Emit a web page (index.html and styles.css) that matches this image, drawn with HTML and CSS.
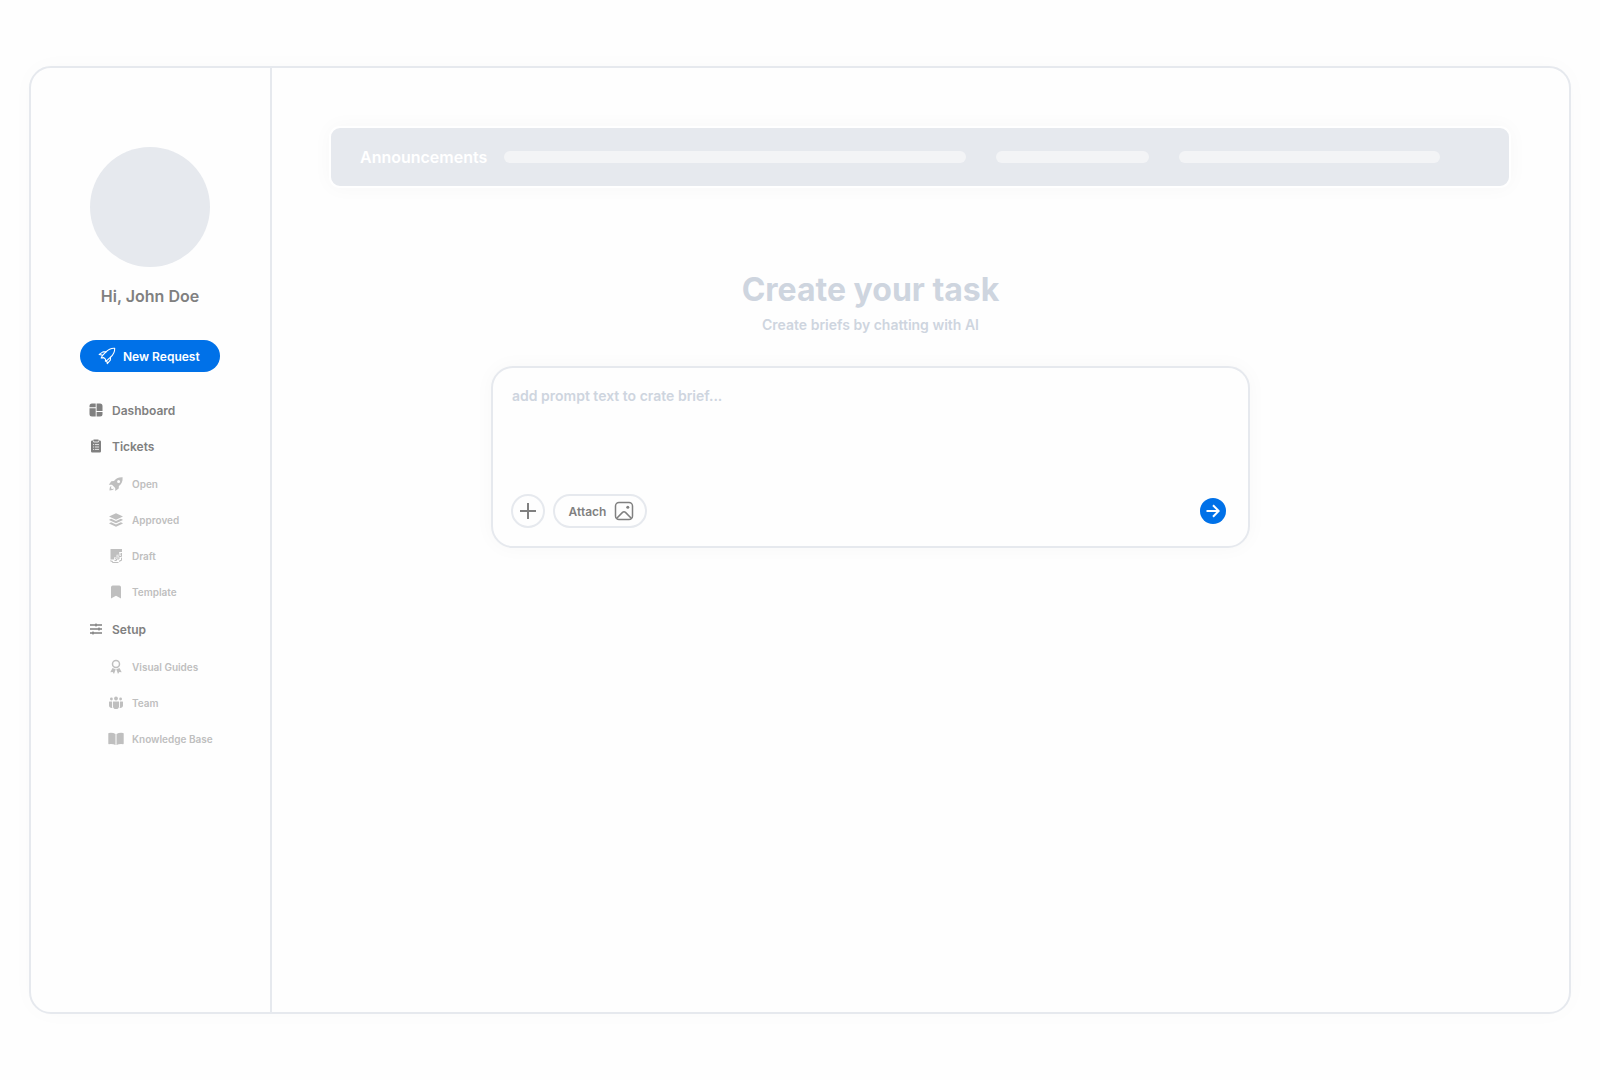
FILE: index.html
```html
<!DOCTYPE html>
<html lang="en">
  <head>
    <meta charset="UTF-8" />
    <meta name="viewport" content="width=device-width, initial-scale=1.0" />
    <title>Create your task</title>
    <link rel="stylesheet" href="styles.css">
  </head>
  <body>
    <div class="app">
      <!-- Sidebar -->
      <aside class="sidebar">
        <div class="avatar"></div>
        <p class="greeting">Hi, John Doe</p>
        <button type="button" class="new-request">
          <svg width="18" height="18" viewBox="0 0 18 18" fill="none" stroke="currentColor" stroke-width="1.1" stroke-linejoin="round" stroke-linecap="round">
            <path d="M16.7 1.2C13.4 1 10.4 2.2 8 4.9L5 4.9L1.2 7.4L4.6 8.3L3.2 11L5.8 10.6L7.6 12.3L7.4 14.2L8.7 13.6L9.3 16.7L12.3 13.2L12.6 10.1C15.4 7.6 16.8 4.8 16.7 1.2Z" />
            <path d="M8 4.9L4.6 8.3M12.6 10.1L8.7 13.6" />
          </svg>
          New Request
        </button>

        <nav>
          <ul class="menu">
            <li>
              <a href="#" class="menu-link">
                <svg width="14" height="14" viewBox="0 0 14 14" fill="currentColor">
                  <path d="M3 .5H6.7V4.2H.5V3A2.5 2.5 0 0 1 3 .5ZM.5 5.2H6.7V13.5H3A2.5 2.5 0 0 1 .5 11ZM7.6 .5H11A2.5 2.5 0 0 1 13.5 3V8H7.6ZM7.6 9H13.5V11A2.5 2.5 0 0 1 11 13.5H7.6Z" />
                </svg>
                Dashboard
              </a>
            </li>
            <li>
              <a href="#" class="menu-link">
                <svg width="14" height="14" viewBox="0 0 14 14">
                  <path fill="currentColor" d="M3.2 1.5H4.5V.5H9.5V1.5H10.8A1.2 1.2 0 0 1 12 2.7V12.3A1.2 1.2 0 0 1 10.8 13.5H3.2A1.2 1.2 0 0 1 2 12.3V2.7A1.2 1.2 0 0 1 3.2 1.5Z" />
                  <path fill="none" stroke="#fff" stroke-width=".8" d="M4.6 1.8V3H9.4V1.8M4 5.6H5M5.8 5.6H10M4 8H5M5.8 8H10M4 10.4H5M5.8 10.4H10" />
                </svg>
                Tickets
              </a>
              <ul class="submenu">
                <li>
                  <a href="#" class="submenu-link">
                    <svg width="16" height="16" viewBox="0 0 16 16" fill="currentColor">
                      <path fill-rule="evenodd" d="M14.6 1.2C10.3 1 7.8 2.5 6 5.1L3.3 5.3L.8 8.7L4 8.8L7.2 12L7.3 15.1L10.7 12.6L10.9 9.9C13.5 8 14.9 5.5 14.6 1.2ZM10.6 3.9A1.5 1.5 0 1 1 10.6 6.9A1.5 1.5 0 1 1 10.6 3.9Z" />
                      <path d="M3.4 9.9C1.8 10.4 1.5 12 1.5 14.5C3.8 14.4 5.4 14.1 6 12.5L4.6 12.9L3.2 12.8L3.1 11.4Z" />
                    </svg>
                    Open
                  </a>
                </li>
                <li>
                  <a href="#" class="submenu-link">
                    <svg width="16" height="16" viewBox="0 0 16 16" fill="currentColor">
                      <path d="M8 1.2L14.5 4.2Q15 4.5 14.5 4.8L8 7.8L1.5 4.8Q1 4.5 1.5 4.2Z" />
                      <path d="M1.5 7.6L3.2 6.8L8 9L12.8 6.8L14.5 7.6Q15 8 14.5 8.3L8 11.2L1.5 8.3Q1 8 1.5 7.6Z" />
                      <path d="M1.5 11L3.2 10.2L8 12.4L12.8 10.2L14.5 11Q15 11.4 14.5 11.7L8 14.7L1.5 11.7Q1 11.4 1.5 11Z" />
                    </svg>
                    Approved
                  </a>
                </li>
                <li>
                  <a href="#" class="submenu-link">
                    <svg width="16" height="16" viewBox="0 0 16 16">
                      <path fill="currentColor" d="M2.5 1H14V4H11.2V6.8H8.6V9.2H6.2V11.5H2.5Z" />
                      <path fill="none" stroke="currentColor" stroke-width="1" d="M13.5 5V8.5H11V11H8.5V12.5H6.5M13.5 9.7V12.5H11.8V14M2.8 12.3V13.3H4.5V14.5H10.5" />
                      <path fill="none" stroke="currentColor" stroke-width=".7" d="M12.2 5.2V7.3H9.8V9.8H7.5V11.4" />
                    </svg>
                    Draft
                  </a>
                </li>
                <li>
                  <a href="#" class="submenu-link">
                    <svg width="16" height="16" viewBox="0 0 16 16" fill="currentColor">
                      <path d="M4.8 1.5H11.2A1.8 1.8 0 0 1 13 3.3V14.5L8 11.8L3 14.5V3.3A1.8 1.8 0 0 1 4.8 1.5Z" />
                    </svg>
                    Template
                  </a>
                </li>
              </ul>
            </li>
            <li>
              <a href="#" class="menu-link">
                <svg width="14" height="14" viewBox="0 0 14 14" fill="none" stroke="currentColor" stroke-width="1.3">
                  <path d="M1 3H13M1 7H13M1 11H13M7 1.4V4.6M10 5.4V8.6M4 9.4V12.6" />
                </svg>
                Setup
              </a>
              <ul class="submenu">
                <li>
                  <a href="#" class="submenu-link">
                    <svg width="16" height="16" viewBox="0 0 16 16">
                      <circle cx="8" cy="5" r="3.5" fill="none" stroke="currentColor" stroke-width="1.5" />
                      <path fill="currentColor" d="M4.5 9L7.7 10.2L6 15L4.7 12.9L2.3 13.2ZM11.5 9L8.3 10.2L10 15L11.3 12.9L13.7 13.2Z" />
                    </svg>
                    Visual Guides
                  </a>
                </li>
                <li>
                  <a href="#" class="submenu-link">
                    <svg width="16" height="16" viewBox="0 0 16 16" fill="currentColor">
                      <circle cx="8" cy="3.5" r="1.9" />
                      <circle cx="3.4" cy="4" r="1.4" />
                      <circle cx="12.6" cy="4" r="1.4" />
                      <path d="M5.3 6.6H10.7Q11.1 6.6 11.1 7.1V11A3.1 3.1 0 0 1 4.9 11V7.1Q4.9 6.6 5.3 6.6ZM1.5 6.6H4V11.2Q4 12 4.4 12.9C2.3 13.1 1 12 1 10.5V7.1Q1 6.6 1.5 6.6ZM12 6.6H14.5Q15 6.6 15 7.1V10.5C15 12 13.7 13.1 11.6 12.9Q12 12 12 11.2Z" />
                    </svg>
                    Team
                  </a>
                </li>
                <li>
                  <a href="#" class="submenu-link">
                    <svg width="16" height="16" viewBox="0 0 16 16" fill="currentColor">
                      <path d="M.3 2.6Q.3 2 .9 1.9Q4.8 1.3 7.5 2.9V14Q4.6 12.7 .9 13.2Q.3 13.2 .3 12.6ZM15.7 2.6Q15.7 2 15.1 1.9Q11.2 1.3 8.5 2.9V14Q11.4 12.7 15.1 13.2Q15.7 13.2 15.7 12.6Z" />
                    </svg>
                    Knowledge Base
                  </a>
                </li>
              </ul>
            </li>
          </ul>
        </nav>
      </aside>

      <!-- Main content -->
      <main class="content">
        <section class="announcements">
          <h2>Announcements</h2>
          <div class="bars">
            <span class="bar bar-long"></span>
            <span class="bar bar-short"></span>
            <span class="bar bar-medium"></span>
          </div>
        </section>

        <section class="task">
          <h1>Create your task</h1>
          <p class="subtitle">Create briefs by chatting with AI</p>

          <form class="prompt">
            <textarea aria-label="Prompt" placeholder="add prompt text to crate brief..."></textarea>
            <div class="prompt-actions">
              <button type="button" class="add" aria-label="Add">
                <svg width="16" height="16" viewBox="0 0 16 16" stroke="currentColor" stroke-width="2">
                  <path d="M8 0V16M0 8H16" />
                </svg>
              </button>
              <button type="button" class="attach">
                Attach
                <svg width="20" height="20" viewBox="0 0 20 20" fill="none" stroke="currentColor" stroke-width="1.5">
                  <rect x="1.5" y="1.5" width="17" height="17" rx="3.5" />
                  <path d="M2.5 17.5L8.5 11.4Q10 10 11.5 11.4L17.5 17.5" />
                  <circle cx="13.8" cy="6.3" r="1.5" fill="currentColor" stroke="none" />
                </svg>
              </button>
              <button type="submit" class="send" aria-label="Send">
                <svg width="14" height="14" viewBox="0 0 14 14" fill="none" stroke="currentColor" stroke-width="2">
                  <path d="M.5 7H12.5M7 1.2L12.7 7L7 12.8" />
                </svg>
              </button>
            </div>
          </form>
        </section>
      </main>
    </div>
  </body>
</html>
```

FILE: styles.css
```css
* {
  box-sizing: border-box;
}

/* Page background and base font */
body {
  margin: 0;
  min-height: 100vh;
  padding: 66px 29px;
  display: flex;
  font-family: Inter, sans-serif;
  font-weight: 600;
  color: #808080;
  background: #fefefe;
}

h1,
h2,
p,
ul {
  margin: 0;
  padding: 0;
}

ul {
  list-style: none;
}

a {
  color: inherit;
  text-decoration: none;
}

button {
  font: inherit;
  color: inherit;
  padding: 0;
  cursor: pointer;
}

svg {
  display: block;
  flex: none;
}

/* App frame */
.app {
  flex: 1;
  display: flex;
  background: #fefefe;
  border: 2px solid #e6e9ee;
  border-radius: 22px;
  box-shadow: 0 0 24px rgba(0, 0, 0, 0.02);
}

/* Sidebar */
.sidebar {
  flex: none;
  width: 241px;
  padding: 79px 1px 0 0;
  border-right: 2px solid #e6e9ee;
  display: flex;
  flex-direction: column;
  align-items: center;
}

.avatar {
  width: 120px;
  height: 120px;
  border-radius: 50%;
  background: #e6e9ee;
}

.greeting {
  margin-top: 17px;
  font-size: 16px;
  line-height: 24px;
}

.new-request {
  display: flex;
  align-items: center;
  gap: 7px;
  width: 140px;
  height: 32px;
  margin-top: 32px;
  padding-left: 18px;
  border: none;
  border-radius: 16px;
  background: #0071e8;
  color: #fff;
  font-size: 12px;
}

/* Navigation */
nav {
  width: 100%;
  margin-top: 20px;
  padding-left: 58px;
}

.menu-link,
.submenu-link {
  display: flex;
  align-items: center;
  gap: 9px;
  height: 36px;
  font-size: 12px;
}

.submenu {
  padding: 2px 0 1px 19px;
}

.submenu-link {
  gap: 8px;
  font-size: 10px;
  color: #bfbfbf;
}

/* Main content */
.content {
  flex: 1;
  padding: 58px 58px 58px 57px;
}

.announcements {
  display: flex;
  align-items: center;
  gap: 17px;
  height: 62px;
  padding: 0 69px 0 29px;
  border: 2px solid #fff;
  border-radius: 11px;
  background: #e6e9ee;
  box-shadow: 0 0 20px rgba(0, 0, 0, 0.03);
}

.announcements h2 {
  font-size: 16px;
  font-weight: 600;
  color: #fff;
}

.bars {
  flex: 1;
  display: grid;
  grid-template-columns: 462fr 153fr 261fr;
  gap: 30px;
}

.bar {
  height: 12px;
  border-radius: 6px;
  background: #f3f4f6;
}

/* Task prompt */
.task {
  display: flex;
  flex-direction: column;
  align-items: center;
  margin-top: 82px;
  padding-right: 99px;
  color: #ced5df;
}

.task h1 {
  font-size: 32px;
  line-height: 40px;
}

.subtitle {
  margin-top: 5px;
  font-size: 14px;
  line-height: 20px;
}

.prompt {
  display: flex;
  flex-direction: column;
  width: 100%;
  max-width: 759px;
  margin-top: 31px;
  padding: 18px 22px 18px 18px;
  background: #fefefe;
  border: 2px solid #e6e9ee;
  border-radius: 22px;
  box-shadow: 0 0 20px rgba(0, 0, 0, 0.03);
}

.prompt textarea {
  height: 108px;
  padding: 0 1px;
  border: none;
  outline: none;
  resize: none;
  background: none;
  font: inherit;
  font-size: 14px;
  line-height: 20px;
  color: #808080;
}

.prompt textarea::placeholder {
  color: #ced5df;
}

.prompt-actions {
  display: flex;
  align-items: center;
  gap: 8px;
  color: #808080;
}

.add,
.attach,
.send {
  display: flex;
  align-items: center;
  justify-content: center;
  border: 2px solid #e6e9ee;
  border-radius: 17px;
  background: none;
}

.add {
  width: 34px;
  height: 34px;
}

.attach {
  gap: 8px;
  width: 94px;
  height: 34px;
  padding-left: 3px;
  font-size: 12px;
}

.send {
  width: 26px;
  height: 26px;
  margin-left: auto;
  border: none;
  background: #0071e8;
  color: #fff;
}
```
